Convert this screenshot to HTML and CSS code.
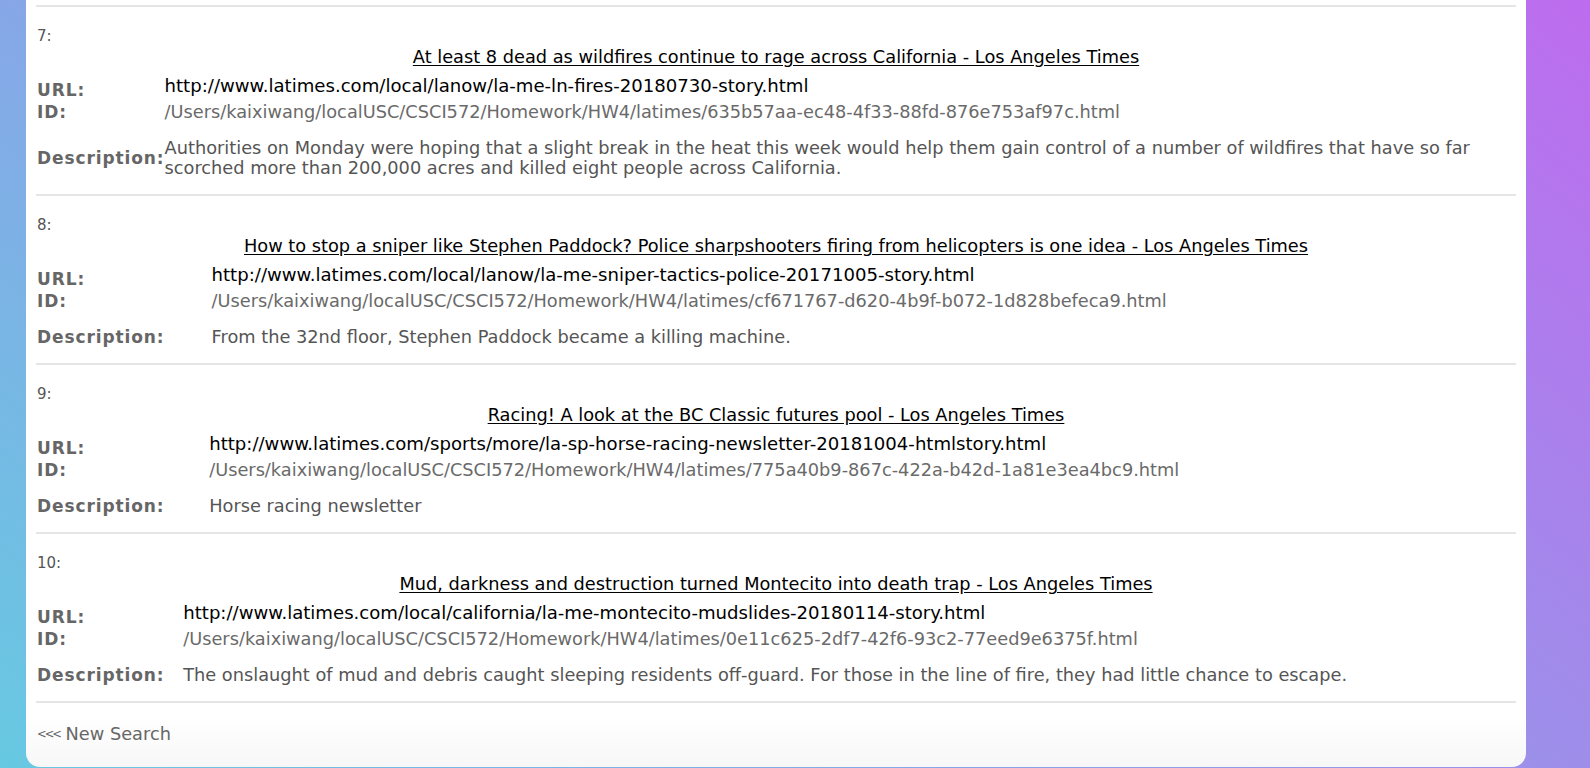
FILE: index.html
```html
<!DOCTYPE html>
<html lang="en">
<head>
<meta charset="utf-8">
<title>Search results</title>
<link rel="stylesheet" href="styles.css">
</head>
<body>
<main class="card">
  <section class="result">
    <hr class="rule">
    <div class="num">7:</div>
    <div class="title"><a href="#">At least 8 dead as wildfires continue to rage across California - Los Angeles Times</a></div>
    <table class="info">
      <tr class="meta url-row"><th>URL:</th><td class="url">http://www.latimes.com/local/lanow/la-me-ln-fires-20180730-story.html</td></tr>
      <tr class="meta id-row"><th>ID:</th><td class="id">/Users/kaixiwang/localUSC/CSCI572/Homework/HW4/latimes/635b57aa-ec48-4f33-88fd-876e753af97c.html</td></tr>
      <tr class="desc"><th>Description:</th><td>Authorities on Monday were hoping that a slight break in the heat this week would help them gain control of a number of wildfires that have so far scorched more than 200,000 acres and killed eight people across California.</td></tr>
    </table>
  </section>
  <section class="result">
    <hr class="rule">
    <div class="num">8:</div>
    <div class="title"><a href="#">How to stop a sniper like Stephen Paddock? Police sharpshooters firing from helicopters is one idea - Los Angeles Times</a></div>
    <table class="info">
      <tr class="meta url-row"><th>URL:</th><td class="url">http://www.latimes.com/local/lanow/la-me-sniper-tactics-police-20171005-story.html</td></tr>
      <tr class="meta id-row"><th>ID:</th><td class="id">/Users/kaixiwang/localUSC/CSCI572/Homework/HW4/latimes/cf671767-d620-4b9f-b072-1d828befeca9.html</td></tr>
      <tr class="desc"><th>Description:</th><td>From the 32nd floor, Stephen Paddock became a killing machine.</td></tr>
    </table>
  </section>
  <section class="result">
    <hr class="rule">
    <div class="num">9:</div>
    <div class="title"><a href="#">Racing! A look at the BC Classic futures pool - Los Angeles Times</a></div>
    <table class="info">
      <tr class="meta url-row"><th>URL:</th><td class="url">http://www.latimes.com/sports/more/la-sp-horse-racing-newsletter-20181004-htmlstory.html</td></tr>
      <tr class="meta id-row"><th>ID:</th><td class="id">/Users/kaixiwang/localUSC/CSCI572/Homework/HW4/latimes/775a40b9-867c-422a-b42d-1a81e3ea4bc9.html</td></tr>
      <tr class="desc"><th>Description:</th><td>Horse racing newsletter</td></tr>
    </table>
  </section>
  <section class="result">
    <hr class="rule">
    <div class="num">10:</div>
    <div class="title"><a href="#">Mud, darkness and destruction turned Montecito into death trap - Los Angeles Times</a></div>
    <table class="info">
      <tr class="meta url-row"><th>URL:</th><td class="url">http://www.latimes.com/local/california/la-me-montecito-mudslides-20180114-story.html</td></tr>
      <tr class="meta id-row"><th>ID:</th><td class="id">/Users/kaixiwang/localUSC/CSCI572/Homework/HW4/latimes/0e11c625-2df7-42f6-93c2-77eed9e6375f.html</td></tr>
      <tr class="desc"><th>Description:</th><td>The onslaught of mud and debris caught sleeping residents off-guard. For those in the line of fire, they had little chance to escape.</td></tr>
    </table>
  </section>
  <hr class="rule">
  <a class="back" href="#"><span class="chev">&lt;&lt;&lt;</span> New Search</a>
</main>
</body>
</html>
```

FILE: styles.css
```css
html {
  min-height: 100%;
  background: linear-gradient(40deg, #67c9e2 0%, #bd6cef 100%);
}

body {
  margin: 0;
  min-height: 768px;
  font-family: "DejaVu Sans", "Liberation Sans", sans-serif;
  font-size: 17.75px;
}

.card {
  box-sizing: border-box;
  width: 1500px;
  margin-left: 26px;
  padding: 5px 10px 22px;
  background: linear-gradient(to bottom, #ffffff calc(100% - 50px), #f7f7f7);
  border-radius: 0 0 14px 14px;
}

.rule {
  margin: 0;
  height: 2px;
  border: 0;
  background: #e5e5e5;
}

.result {
  padding-bottom: 16px;
}

.num {
  margin: 19px 0 0 1px;
  font-size: 15px;
  line-height: 20px;
  color: #555;
}

.title {
  margin-top: 0;
  line-height: 22px;
  text-align: center;
}

.title a {
  color: #000;
  text-decoration: underline;
  text-underline-offset: 2px;
}

.info {
  width: 100%;
  margin-top: 10px;
  border-collapse: collapse;
  border-spacing: 0;
}

.info th,
.info td {
  padding: 0;
  font-size: 17.75px;
}

.info th {
  text-align: left;
  font-size: 17px;
  font-weight: 700;
  letter-spacing: 0.9px;
  color: #666;
  padding-left: 1px;
}

.meta th,
.meta td {
  vertical-align: top;
  line-height: 16px;
}

.url-row th {
  padding-top: 4px;
}

.url-row td {
  padding-bottom: 5px;
}

.id-row th,
.id-row td {
  padding-top: 5px;
}

.info .url {
  color: #000;
  font-size: 18.1px;
}

.info .id {
  color: #6a6a6a;
}

.desc th,
.desc td {
  vertical-align: middle;
  line-height: 20px;
  padding-top: 18px;
}

.desc td {
  color: #555;
}

.back {
  display: block;
  margin: 20px 0 0 1px;
  line-height: 22px;
  font-size: 17.75px;
  color: #666;
  text-decoration: none;
}

.chev {
  font-size: 11.5px;
  letter-spacing: -2px;
  vertical-align: 0.2em;
}
```
